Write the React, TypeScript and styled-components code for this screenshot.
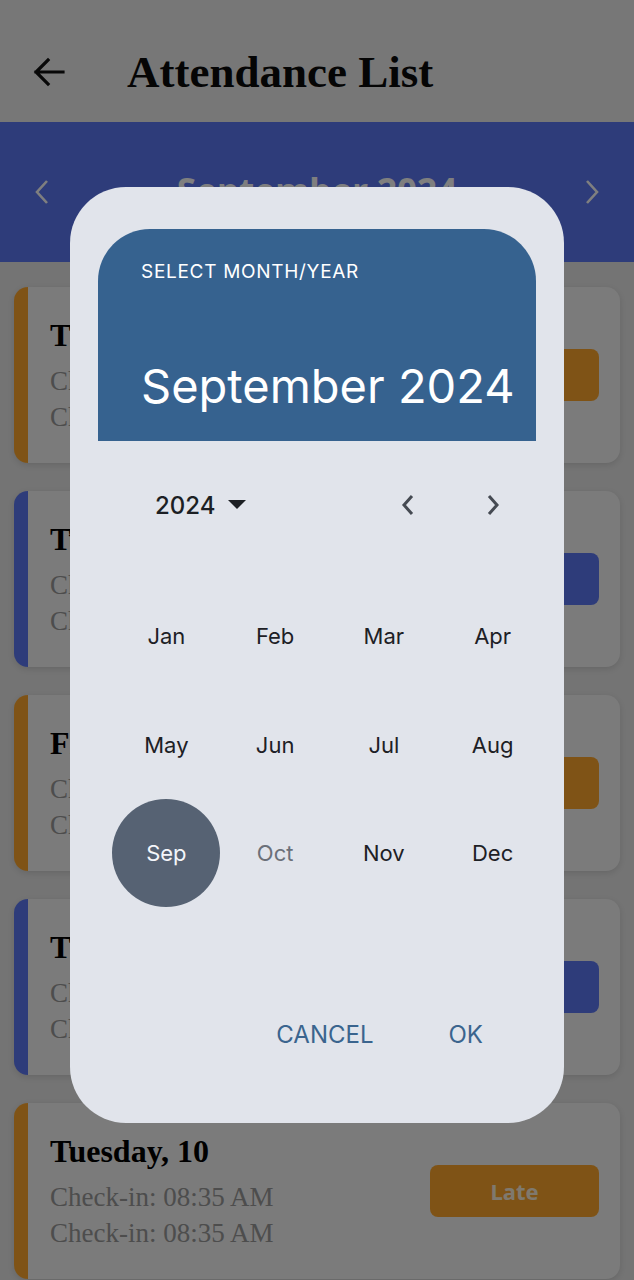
import React from "react";
import styled, { createGlobalStyle } from "styled-components";

const Global = createGlobalStyle`
  html, body { margin: 0; padding: 0; }
  body { background: #e8e8e8; width: 634px; height: 1280px; overflow: hidden; }
  * { box-sizing: border-box; }
`;

const Page = styled.div`
  width: 634px;
  height: 1280px;
  overflow: hidden;
  position: relative;
  background: #e8e8e8;
`;

const AppBar = styled.header`
  height: 122px;
  background: #eeeeee;
  display: flex;
  align-items: center;
  padding: 22px 0 0 33px;
  gap: 62px;
`;

const Title = styled.h1`
  margin: 0;
  font-family: "Liberation Serif", serif;
  font-weight: 700;
  font-size: 45px;
  color: #0a0a0a;
  line-height: 1;
`;

const Banner = styled.div`
  height: 140px;
  background: #5c78f4;
  display: flex;
  align-items: center;
  justify-content: space-between;
  padding: 0 34px;
`;

const BannerText = styled.div`
  font-family: "Noto Sans", sans-serif;
  font-weight: 700;
  font-size: 35px;
  line-height: 40px;
  color: #ffffff;
  padding-bottom: 2px;
`;

const CardList = styled.div`
  display: flex;
  flex-direction: column;
  gap: 28px;
  padding: 25px 14px 0 14px;
`;

const Card = styled.div<{ $accent: string }>`
  height: 176px;
  flex-shrink: 0;
  background: #f6f6f6;
  border-left: 14px solid ${(p) => p.$accent};
  border-radius: 14px;
  box-shadow: 0 2px 6px rgba(0, 0, 0, 0.12);
  display: flex;
  align-items: center;
  justify-content: space-between;
  padding: 0 21px 0 22px;
`;

const CardInfo = styled.div`
  display: flex;
  flex-direction: column;
  align-self: flex-start;
  padding-top: 29px;
`;

const Day = styled.div`
  font-family: "Liberation Serif", serif;
  font-weight: 700;
  font-size: 32px;
  line-height: 38px;
  color: #000;
  margin-bottom: 9px;
`;

const Line = styled.div`
  font-family: "Liberation Serif", serif;
  font-size: 27px;
  line-height: 36px;
  color: #9a9a9a;
`;

const Status = styled.div<{ $bg: string }>`
  width: 169px;
  height: 52px;
  border-radius: 8px;
  background: ${(p) => p.$bg};
  display: flex;
  align-items: center;
  justify-content: center;
  font-family: "Noto Sans", sans-serif;
  font-weight: 700;
  font-size: 22px;
  color: #fff2dd;
`;

const Overlay = styled.div`
  position: absolute;
  inset: 0;
  background: rgba(0, 0, 0, 0.5);
  display: flex;
  justify-content: center;
  align-items: flex-start;
  padding-top: 187px;
`;

const Dialog = styled.div`
  width: 494px;
  background: #e1e4eb;
  border-radius: 56px;
  padding: 42px 28px 64px 28px;
  display: flex;
  flex-direction: column;
  font-family: "Inter", sans-serif;
`;

const DialogHeader = styled.div`
  height: 212px;
  background: #36628f;
  border-radius: 52px 52px 0 0;
  padding: 31px 43px 0 43px;
  display: flex;
  flex-direction: column;
  color: #ffffff;
`;

const HeaderLabel = styled.div`
  font-size: 19px;
  line-height: 24px;
  letter-spacing: 0.7px;
  font-weight: 400;
`;

const HeaderValue = styled.div`
  margin-top: 74px;
  font-size: 47px;
  line-height: 56px;
  font-weight: 400;
  white-space: nowrap;
`;

const YearRow = styled.div`
  margin-top: 40px;
  height: 48px;
  display: flex;
  align-items: center;
  padding: 0 23px 0 57px;
`;

const YearButton = styled.div`
  display: flex;
  align-items: center;
  gap: 13px;
  font-size: 24px;
  font-weight: 500;
  color: #1c1f24;
`;

const Spacer = styled.div`
  flex: 1;
`;

const NavGroup = styled.div`
  display: flex;
  gap: 45px;
`;

const NavButton = styled.div`
  width: 40px;
  height: 40px;
  display: flex;
  align-items: center;
  justify-content: center;
`;

const MonthGrid = styled.div`
  margin-top: 53px;
  margin-left: 14px;
  width: 435px;
  display: grid;
  grid-template-columns: repeat(4, 1fr);
  grid-auto-rows: 108.5px;
`;

const Month = styled.div<{ $selected?: boolean; $muted?: boolean }>`
  display: flex;
  align-items: center;
  justify-content: center;
  font-size: 22px;
  font-weight: 400;
  color: ${(p) => (p.$selected ? "#f4f6fa" : p.$muted ? "#6b7079" : "#1d2025")};
  background: ${(p) => (p.$selected ? "#566273" : "transparent")};
  border-radius: 50%;
  width: 108px;
  height: 108px;
  justify-self: center;
  align-self: center;
`;

const Actions = styled.div`
  margin-top: 103px;
  height: 48px;
  display: flex;
  justify-content: flex-end;
  align-items: center;
  gap: 51px;
  padding-right: 41px;
`;

const TextButton = styled.div`
  padding: 0 12px;
  font-size: 24px;
  font-weight: 400;
  color: #3a648e;
`;

const cards = [
  { day: "Thursday, 19", accent: "#ffa72c", status: "Late" },
  { day: "Tuesday, 17", accent: "#5c78f4", status: "On Time" },
  { day: "Friday, 13", accent: "#ffa72c", status: "Late" },
  { day: "Thursday, 12", accent: "#5c78f4", status: "On Time" },
  { day: "Tuesday, 10", accent: "#ffa72c", status: "Late" },
];

const months = ["Jan", "Feb", "Mar", "Apr", "May", "Jun", "Jul", "Aug", "Sep", "Oct", "Nov", "Dec"];

export default function App() {
  return (
    <Page>
      <Global />
      <AppBar>
        <svg width="32" height="30" viewBox="0 0 32 30" fill="none">
          <path d="M3 15 H30 M15 3 L3 15 L15 27" stroke="#111" strokeWidth="3.2" strokeLinecap="square" />
        </svg>
        <Title>Attendance List</Title>
      </AppBar>
      <Banner>
        <svg width="16" height="26" viewBox="0 0 16 26" fill="none">
          <path d="M13 2 L3 13 L13 24" stroke="#fff" strokeWidth="2.6" />
        </svg>
        <BannerText>September 2024</BannerText>
        <svg width="16" height="26" viewBox="0 0 16 26" fill="none">
          <path d="M3 2 L13 13 L3 24" stroke="#fff" strokeWidth="2.6" />
        </svg>
      </Banner>
      <CardList>
        {cards.map((c, i) => (
          <Card key={i} $accent={c.accent}>
            <CardInfo>
              <Day>{c.day}</Day>
              <Line>Check-in: 08:35 AM</Line>
              <Line>Check-in: 08:35 AM</Line>
            </CardInfo>
            <Status $bg={c.accent}>{c.status}</Status>
          </Card>
        ))}
      </CardList>
      <Overlay>
        <Dialog>
          <DialogHeader>
            <HeaderLabel>SELECT MONTH/YEAR</HeaderLabel>
            <HeaderValue>September 2024</HeaderValue>
          </DialogHeader>
          <YearRow>
            <YearButton>
              2024
              <svg width="18" height="10" viewBox="0 0 18 10">
                <path d="M0 0 H18 L9 9 Z" fill="#1c1f24" />
              </svg>
            </YearButton>
            <Spacer />
            <NavGroup>
              <NavButton>
                <svg width="16" height="24" viewBox="0 0 16 24" fill="none">
                  <path d="M12 3 L4 12 L12 21" stroke="#454a52" strokeWidth="3" />
                </svg>
              </NavButton>
              <NavButton>
                <svg width="16" height="24" viewBox="0 0 16 24" fill="none">
                  <path d="M4 3 L12 12 L4 21" stroke="#454a52" strokeWidth="3" />
                </svg>
              </NavButton>
            </NavGroup>
          </YearRow>
          <MonthGrid>
            {months.map((m) => (
              <Month key={m} $selected={m === "Sep"} $muted={m === "Oct"}>
                {m}
              </Month>
            ))}
          </MonthGrid>
          <Actions>
            <TextButton>CANCEL</TextButton>
            <TextButton>OK</TextButton>
          </Actions>
        </Dialog>
      </Overlay>
    </Page>
  );
}
